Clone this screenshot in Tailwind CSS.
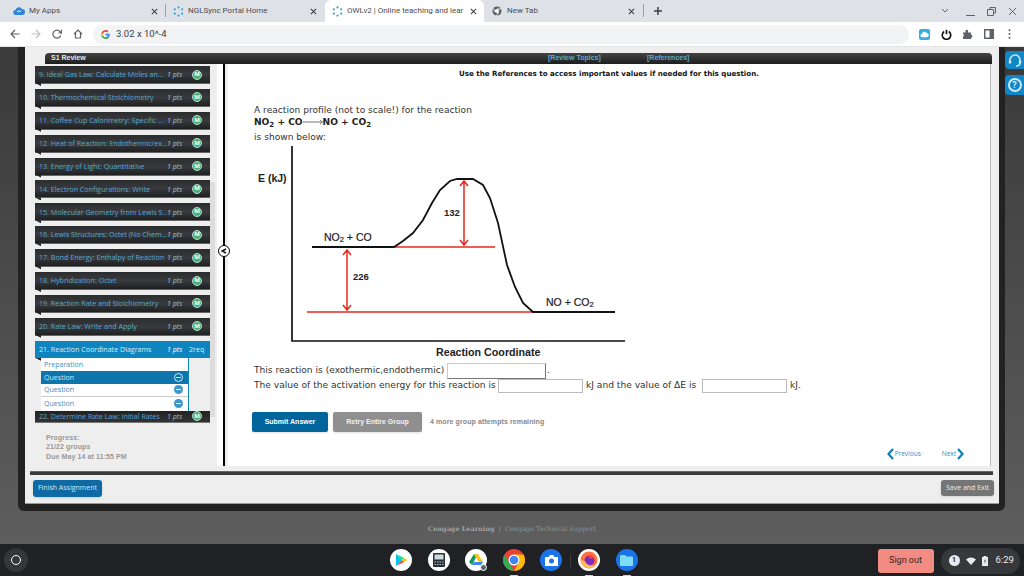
<!DOCTYPE html>
<html lang="en">
  <head>
    <meta charset="UTF-8" />
    <title>OWLv2 | Online teaching and learning</title>
    <script src="https://cdn.jsdelivr.net/npm/@tailwindcss/browser@4"></script>
  </head>
  <body class="w-[1024px] h-[576px] overflow-hidden flex flex-col bg-[#202124] font-['Roboto',sans-serif]">
    <!-- tab strip -->
    <div class="h-[22px] bg-[#dee1e6] flex text-[8px] text-[#4a4d50] shrink-0">
      <div class="w-[165px] flex items-center pl-[13px] pr-[7px] gap-[4px]">
        <svg class="w-[12px] h-[10px]" viewBox="0 0 24 20"><path fill="#2f86d6" d="M6 18a5 5 0 0 1-1-10 7 7 0 0 1 13-2 6 6 0 0 1 0 12z"/><path fill="none" stroke="#fff" stroke-width="2" d="M8 12l3-3 2 3 3-3"/></svg>
        <span class="flex-1">My Apps</span>
        <svg class="w-[7px] h-[7px]" viewBox="0 0 8 8"><path stroke="#3c4043" stroke-width="1.2" d="M1 1l6 6M7 1l-6 6"/></svg>
      </div>
      <div class="w-px h-[13px] mt-[4px] bg-[#9aa0a6]"></div>
      <div class="w-[159px] flex items-center pl-[7px] pr-[8px] gap-[4px]">
        <svg class="w-[11px] h-[11px]" viewBox="0 0 12 12"><g fill="#35a7d9"><circle cx="6" cy="1.6" r="1.2"/><circle cx="10" cy="3.6" r="1.2"/><circle cx="10" cy="8.4" r="1.2"/><circle cx="6" cy="10.4" r="1.2"/><circle cx="2" cy="8.4" r="1.2"/><circle cx="2" cy="3.6" r="1.2"/></g></svg>
        <span class="flex-1">NGLSync Portal Home</span>
        <svg class="w-[7px] h-[7px]" viewBox="0 0 8 8"><path stroke="#3c4043" stroke-width="1.2" d="M1 1l6 6M7 1l-6 6"/></svg>
      </div>
      <div class="w-[159px] bg-white rounded-t-[6px] flex items-center pl-[7px] pr-[7px] gap-[4px]">
        <svg class="w-[11px] h-[11px]" viewBox="0 0 12 12"><g fill="#35a7d9"><circle cx="6" cy="1.6" r="1.2"/><circle cx="10" cy="3.6" r="1.2"/><circle cx="10" cy="8.4" r="1.2"/><circle cx="6" cy="10.4" r="1.2"/><circle cx="2" cy="8.4" r="1.2"/><circle cx="2" cy="3.6" r="1.2"/></g></svg>
        <span class="flex-1 whitespace-nowrap overflow-hidden">OWLv2 | Online teaching and lear</span>
        <svg class="w-[7px] h-[7px]" viewBox="0 0 8 8"><path stroke="#3c4043" stroke-width="1.2" d="M1 1l6 6M7 1l-6 6"/></svg>
      </div>
      <div class="w-[159px] flex items-center pl-[8px] pr-[8px] gap-[4px]">
        <svg class="w-[10px] h-[10px]" viewBox="0 0 12 12"><circle cx="6" cy="6" r="5.5" fill="#5f6368"/><circle cx="6" cy="6" r="2.4" fill="#fff"/><path stroke="#fff" d="M6 3.6h5M3.9 7.2L1.5 3M8 7.2l-2.500 4.400"/></svg>
        <span class="flex-1 ml-[1px]">New Tab</span>
        <svg class="w-[7px] h-[7px]" viewBox="0 0 8 8"><path stroke="#3c4043" stroke-width="1.2" d="M1 1l6 6M7 1l-6 6"/></svg>
      </div>
      <div class="w-px h-[13px] mt-[4px] bg-[#9aa0a6]"></div>
      <svg class="w-[10px] h-[10px] mt-[6px] ml-[9px]" viewBox="0 0 10 10"><path stroke="#3c4043" stroke-width="1.500" d="M5 1v8M1 5h8"/></svg>
      <div class="ml-auto flex items-center gap-[12px] pr-[7px]">
        <svg class="w-[8px] h-[6px] mr-[5px]" viewBox="0 0 8 6"><path fill="none" stroke="#5f6368" d="M1 1l3 3 3-3"/></svg>
        <svg class="w-[9px] h-[9px]" viewBox="0 0 9 9"><path stroke="#5f6368" d="M0 8.500h9"/></svg>
        <svg class="w-[9px] h-[9px]" viewBox="0 0 9 9"><path fill="none" stroke="#5f6368" d="M3 2.500V.5h5.500V6H6.500M.5 2.500H6.500V8.500H.5z"/></svg>
        <svg class="w-[9px] h-[9px]" viewBox="0 0 9 9"><path stroke="#5f6368" d="M1 1l7 7M8 1L1 8"/></svg>
      </div>
    </div>

    <!-- toolbar -->
    <div class="h-[25px] bg-white border-b border-[#e4e5e7] flex items-center shrink-0">
      <div class="flex items-center w-[93px] pl-[10px] gap-[11px]">
        <svg class="w-[10px] h-[10px]" viewBox="0 0 10 10"><path fill="none" stroke="#5f6368" stroke-width="1.200" d="M9.500 5H1M5 1L1 5l4 4"/></svg>
        <svg class="w-[10px] h-[10px]" viewBox="0 0 10 10"><path fill="none" stroke="#bdc1c6" stroke-width="1.200" d="M.5 5H9M5 1l4 4-4 4"/></svg>
        <svg class="w-[10px] h-[10px]" viewBox="0 0 10 10"><path fill="none" stroke="#5f6368" stroke-width="1.200" d="M8.700 6.500A4 4 0 1 1 8 2.500L9.500 4V.8M9.500 4H6.500"/></svg>
        <svg class="w-[10px] h-[10px]" viewBox="0 0 10 10"><path fill="none" stroke="#5f6368" stroke-width="1.200" d="M1 5l4-4 4 4M2.500 4v5h5V4"/></svg>
      </div>
      <div class="w-[816px] h-[19px] rounded-full bg-[#f1f3f4] flex items-center pl-[8px] text-[9.500px] text-[#3c4043] gap-[5px]">
        <svg class="w-[9px] h-[9px]" viewBox="0 0 18 18"><path fill="#4285f4" d="M17.600 9.200c0-.6-.1-1.200-.2-1.800H9v3.500h4.800a4.100 4.100 0 0 1-1.800 2.700v2.200h2.900c1.700-1.600 2.700-3.900 2.700-6.600z"/><path fill="#34a853" d="M9 18c2.400 0 4.500-.8 5.900-2.200L12 13.600c-.8.500-1.800.9-3 .9-2.300 0-4.300-1.600-5-3.700H1v2.300A9 9 0 0 0 9 18z"/><path fill="#fbbc05" d="M4 10.700a5.400 5.400 0 0 1 0-3.400V5H1a9 9 0 0 0 0 8z"/><path fill="#ea4335" d="M9 3.600c1.300 0 2.500.5 3.400 1.300L15 2.400A9 9 0 0 0 1 5l3 2.300c.7-2.100 2.700-3.700 5-3.700z"/></svg>
        <span class="ml-[1px]">3.02 x 10^-4</span>
      </div>
      <div class="flex-1 flex items-center pl-[10px] gap-[11px]">
        <div class="w-[11px] h-[11px] rounded-[2px] bg-[#35aee2] flex items-center justify-center">
          <svg class="w-[9px] h-[7px]" viewBox="0 0 24 20"><path fill="#fff" d="M6 18a5 5 0 0 1-1-10 7 7 0 0 1 13-2 6 6 0 0 1 0 12z"/></svg>
        </div>
        <svg class="w-[11px] h-[11px]" viewBox="0 0 12 12"><path fill="none" stroke="#111" stroke-width="1.800" d="M3.500 2.800a4.600 4.600 0 1 0 5 0M6 .8v5"/></svg>
        <svg class="w-[10px] h-[10px]" viewBox="0 0 10 10"><path fill="#5f6368" d="M0 3.500h2.500V2a1.300 1.300 0 0 1 2.600 0v1.500h3v2.600a1.300 1.300 0 0 1 0 2.600V10H0V7.500a1.300 1.300 0 0 0 0-2.500z"/></svg>
        <svg class="w-[10px] h-[10px]" viewBox="0 0 10 10"><path fill="#5f6368" d="M0 0h10v10H0z"/><path fill="#fff" d="M1.500 1.500h4v7h-4z"/></svg>
        <svg class="w-[3px] h-[10px] ml-[3px]" viewBox="0 0 3 10"><g fill="#5f6368"><circle cx="1.500" cy="1.300" r="1"/><circle cx="1.500" cy="5" r="1"/><circle cx="1.500" cy="8.700" r="1"/></g></svg>
      </div>
    </div>

    <!-- page -->
    <div class="h-[497px] relative bg-linear-to-b from-[#3a3a3a] to-[#5e5e5e] flex flex-col shrink-0">
      <div class="ml-[18px] w-[987px] h-[464px] bg-[#222222] rounded-b-[6px] pl-[7px] pr-[6px] pb-[7px] shrink-0">
        <div class="h-full bg-[#eeeeee] border-b border-[#999] flex flex-col">
          <div class="ml-[20px] mt-[6px] w-[947px] h-[11px] rounded-t-[4px] bg-linear-to-b from-[#444] to-[#1e1e1e] flex items-center text-[7px] font-bold font-['Liberation_Sans',sans-serif] shrink-0">
            <span class="ml-[6px] text-[#e8e8e8] w-[497px]">S1 Review</span>
            <span class="text-[#55a9d8] w-[99px]">[Review Topics]</span>
            <span class="text-[#55a9d8]">[References]</span>
          </div>

          <div class="flex h-[402px] shrink-0">
            <!-- left column -->
            <div class="ml-[10px] w-[175px] flex flex-col pt-[2px] font-['Open_Sans',sans-serif] text-[7.100px] text-[#55a8d4] shrink-0">
              <div class="h-[357px] overflow-hidden flex flex-col gap-[4.900px]">
                <div class="h-[18px] shrink-0 relative border-b border-[#666] bg-linear-to-b from-[#2b2c2e] via-[#393a3d] to-[#1f2022] flex items-center pl-[4px]"><span class="w-[128px] whitespace-nowrap overflow-hidden">9. Ideal Gas Law: Calculate Moles an...</span><span class="w-[25px] italic text-[#8fc3dd]">1 pts</span><span class="w-[10px] h-[10px] rounded-full bg-[#4caf78] border border-[#b5dcc5] text-white text-[6px] font-bold flex items-center justify-center">M</span><i class="absolute left-0 bottom-[-3px] w-[6px] h-[3px] bg-[#222] [clip-path:polygon(0_0,100%_0,100%_100%)]"></i></div>
                <div class="h-[18px] shrink-0 relative border-b border-[#666] bg-linear-to-b from-[#2b2c2e] via-[#393a3d] to-[#1f2022] flex items-center pl-[4px]"><span class="w-[128px] whitespace-nowrap overflow-hidden">10. Thermochemical Stoichiometry</span><span class="w-[25px] italic text-[#8fc3dd]">1 pts</span><span class="w-[10px] h-[10px] rounded-full bg-[#4caf78] border border-[#b5dcc5] text-white text-[6px] font-bold flex items-center justify-center">M</span><i class="absolute left-0 bottom-[-3px] w-[6px] h-[3px] bg-[#222] [clip-path:polygon(0_0,100%_0,100%_100%)]"></i></div>
                <div class="h-[18px] shrink-0 relative border-b border-[#666] bg-linear-to-b from-[#2b2c2e] via-[#393a3d] to-[#1f2022] flex items-center pl-[4px]"><span class="w-[128px] whitespace-nowrap overflow-hidden">11. Coffee Cup Calorimetry: Specific ...</span><span class="w-[25px] italic text-[#8fc3dd]">1 pts</span><span class="w-[10px] h-[10px] rounded-full bg-[#4caf78] border border-[#b5dcc5] text-white text-[6px] font-bold flex items-center justify-center">M</span><i class="absolute left-0 bottom-[-3px] w-[6px] h-[3px] bg-[#222] [clip-path:polygon(0_0,100%_0,100%_100%)]"></i></div>
                <div class="h-[18px] shrink-0 relative border-b border-[#666] bg-linear-to-b from-[#2b2c2e] via-[#393a3d] to-[#1f2022] flex items-center pl-[4px]"><span class="w-[128px] whitespace-nowrap overflow-hidden">12. Heat of Reaction: Endothermic/ex...</span><span class="w-[25px] italic text-[#8fc3dd]">1 pts</span><span class="w-[10px] h-[10px] rounded-full bg-[#4caf78] border border-[#b5dcc5] text-white text-[6px] font-bold flex items-center justify-center">M</span><i class="absolute left-0 bottom-[-3px] w-[6px] h-[3px] bg-[#222] [clip-path:polygon(0_0,100%_0,100%_100%)]"></i></div>
                <div class="h-[18px] shrink-0 relative border-b border-[#666] bg-linear-to-b from-[#2b2c2e] via-[#393a3d] to-[#1f2022] flex items-center pl-[4px]"><span class="w-[128px] whitespace-nowrap overflow-hidden">13. Energy of Light: Quantitative</span><span class="w-[25px] italic text-[#8fc3dd]">1 pts</span><span class="w-[10px] h-[10px] rounded-full bg-[#4caf78] border border-[#b5dcc5] text-white text-[6px] font-bold flex items-center justify-center">M</span><i class="absolute left-0 bottom-[-3px] w-[6px] h-[3px] bg-[#222] [clip-path:polygon(0_0,100%_0,100%_100%)]"></i></div>
                <div class="h-[18px] shrink-0 relative border-b border-[#666] bg-linear-to-b from-[#2b2c2e] via-[#393a3d] to-[#1f2022] flex items-center pl-[4px]"><span class="w-[128px] whitespace-nowrap overflow-hidden">14. Electron Configurations: Write</span><span class="w-[25px] italic text-[#8fc3dd]">1 pts</span><span class="w-[10px] h-[10px] rounded-full bg-[#4caf78] border border-[#b5dcc5] text-white text-[6px] font-bold flex items-center justify-center">M</span><i class="absolute left-0 bottom-[-3px] w-[6px] h-[3px] bg-[#222] [clip-path:polygon(0_0,100%_0,100%_100%)]"></i></div>
                <div class="h-[18px] shrink-0 relative border-b border-[#666] bg-linear-to-b from-[#2b2c2e] via-[#393a3d] to-[#1f2022] flex items-center pl-[4px]"><span class="w-[128px] whitespace-nowrap overflow-hidden">15. Molecular Geometry from Lewis S...</span><span class="w-[25px] italic text-[#8fc3dd]">1 pts</span><span class="w-[10px] h-[10px] rounded-full bg-[#4caf78] border border-[#b5dcc5] text-white text-[6px] font-bold flex items-center justify-center">M</span><i class="absolute left-0 bottom-[-3px] w-[6px] h-[3px] bg-[#222] [clip-path:polygon(0_0,100%_0,100%_100%)]"></i></div>
                <div class="h-[18px] shrink-0 relative border-b border-[#666] bg-linear-to-b from-[#2b2c2e] via-[#393a3d] to-[#1f2022] flex items-center pl-[4px]"><span class="w-[128px] whitespace-nowrap overflow-hidden">16. Lewis Structures: Octet (No Chem...</span><span class="w-[25px] italic text-[#8fc3dd]">1 pts</span><span class="w-[10px] h-[10px] rounded-full bg-[#4caf78] border border-[#b5dcc5] text-white text-[6px] font-bold flex items-center justify-center">M</span><i class="absolute left-0 bottom-[-3px] w-[6px] h-[3px] bg-[#222] [clip-path:polygon(0_0,100%_0,100%_100%)]"></i></div>
                <div class="h-[18px] shrink-0 relative border-b border-[#666] bg-linear-to-b from-[#2b2c2e] via-[#393a3d] to-[#1f2022] flex items-center pl-[4px]"><span class="w-[128px] whitespace-nowrap overflow-hidden">17. Bond Energy: Enthalpy of Reaction</span><span class="w-[25px] italic text-[#8fc3dd]">1 pts</span><span class="w-[10px] h-[10px] rounded-full bg-[#4caf78] border border-[#b5dcc5] text-white text-[6px] font-bold flex items-center justify-center">M</span><i class="absolute left-0 bottom-[-3px] w-[6px] h-[3px] bg-[#222] [clip-path:polygon(0_0,100%_0,100%_100%)]"></i></div>
                <div class="h-[18px] shrink-0 relative border-b border-[#666] bg-linear-to-b from-[#2b2c2e] via-[#393a3d] to-[#1f2022] flex items-center pl-[4px]"><span class="w-[128px] whitespace-nowrap overflow-hidden">18. Hybridization: Octet</span><span class="w-[25px] italic text-[#8fc3dd]">1 pts</span><span class="w-[10px] h-[10px] rounded-full bg-[#4caf78] border border-[#b5dcc5] text-white text-[6px] font-bold flex items-center justify-center">M</span><i class="absolute left-0 bottom-[-3px] w-[6px] h-[3px] bg-[#222] [clip-path:polygon(0_0,100%_0,100%_100%)]"></i></div>
                <div class="h-[18px] shrink-0 relative border-b border-[#666] bg-linear-to-b from-[#2b2c2e] via-[#393a3d] to-[#1f2022] flex items-center pl-[4px]"><span class="w-[128px] whitespace-nowrap overflow-hidden">19. Reaction Rate and Stoichiometry</span><span class="w-[25px] italic text-[#8fc3dd]">1 pts</span><span class="w-[10px] h-[10px] rounded-full bg-[#4caf78] border border-[#b5dcc5] text-white text-[6px] font-bold flex items-center justify-center">M</span><i class="absolute left-0 bottom-[-3px] w-[6px] h-[3px] bg-[#222] [clip-path:polygon(0_0,100%_0,100%_100%)]"></i></div>
                <div class="h-[18px] shrink-0 relative border-b border-[#666] bg-linear-to-b from-[#2b2c2e] via-[#393a3d] to-[#1f2022] flex items-center pl-[4px]"><span class="w-[128px] whitespace-nowrap overflow-hidden">20. Rate Law: Write and Apply</span><span class="w-[25px] italic text-[#8fc3dd]">1 pts</span><span class="w-[10px] h-[10px] rounded-full bg-[#4caf78] border border-[#b5dcc5] text-white text-[6px] font-bold flex items-center justify-center">M</span><i class="absolute left-0 bottom-[-3px] w-[6px] h-[3px] bg-[#222] [clip-path:polygon(0_0,100%_0,100%_100%)]"></i></div>
                <div class="shrink-0 flex flex-col">
                  <div class="h-[17px] bg-[#0f85c0] text-[#d6edf8] flex items-center pl-[4px]"><span class="w-[128px] whitespace-nowrap overflow-hidden">21. Reaction Coordinate Diagrams</span><span class="w-[22px] italic text-white">1 pts</span><span>2req</span></div>
                  <div class="ml-[6px] w-[148px] border-r border-[#0f85c0] text-[#3a8fbf] relative">
                    <i class="absolute left-[-6px] top-0 w-[6px] h-[3px] bg-[#222] [clip-path:polygon(0_0,100%_0,100%_100%)]"></i>
                    <div class="h-[13px] bg-white flex items-center pl-[3px]">Preparation</div>
                    <div class="h-[13px] bg-[#0f75ad] text-[#cfe8f5] flex items-center justify-between pl-[3px] pr-[5px]">Question<span class="w-[9px] h-[9px] rounded-full border border-[#cfe8f5] flex items-center justify-center"><span class="w-[5px] h-px bg-[#cfe8f5]"></span></span></div>
                    <div class="h-[13px] bg-white border-b border-[#ccc] flex items-center justify-between pl-[3px] pr-[5px]">Question<span class="w-[9px] h-[9px] rounded-full bg-[#3d98cf] flex items-center justify-center"><span class="w-[5px] h-px bg-white"></span></span></div>
                    <div class="h-[14px] bg-white flex items-center justify-between pl-[3px] pr-[5px]">Question<span class="w-[9px] h-[9px] rounded-full bg-[#3d98cf] flex items-center justify-center"><span class="w-[5px] h-px bg-white"></span></span></div>
                  </div>
                  <div class="h-[12px] border-b border-[#777] bg-linear-to-b from-[#222] to-[#333] flex items-center pl-[4px] overflow-hidden"><span class="w-[128px] whitespace-nowrap overflow-hidden">22. Determine Rate Law: Initial Rates</span><span class="w-[25px] italic text-[#8fc3dd]">1 pts</span><span class="w-[10px] h-[10px] rounded-full bg-[#4caf78] border border-[#b5dcc5] text-white text-[6px] font-bold flex items-center justify-center">M</span></div>
                </div>
              </div>
              <div class="ml-[11px] mt-[11px] font-['Liberation_Sans',sans-serif] font-bold text-[7px] leading-[8.500px] tracking-[0.1px] text-[#999]">
                <div>Progress:</div>
                <div>21/22 groups</div>
                <div class="mt-[1.500px]">Due May 14 at 11:55 PM</div>
              </div>
            </div>
            <!-- scrollbar -->
            <div class="w-[5px] h-[235px] mt-[118px] bg-[#dddddd] shrink-0"></div>
            <!-- divider -->
            <div class="ml-[2px] w-[6px] bg-white shrink-0"></div>
            <div class="w-[2px] bg-black shrink-0"></div>
            <div class="w-[3px] shrink-0"></div>

            <!-- question -->
            <div class="w-[763px] bg-white border-r border-[#bbb] font-['DejaVu_Sans',sans-serif] text-[#333] text-[9.100px] shrink-0 relative">
              <p class="text-center text-[7.100px] font-bold text-[#111] mt-[5px] leading-[9px]">Use the References to access important values if needed for this question.</p>
              <div class="pl-[26px]">
                <p class="mt-[26px] leading-[12px]">A reaction profile (not to scale!) for the reaction</p>
                <p class="font-bold text-[#222] leading-[12px] flex items-center h-[12px]">
                  <span>NO<sub class="text-[7px]">2</sub> + CO</span>
                  <svg class="w-[20px] h-[6px]" viewBox="0 0 20 6"><path fill="none" stroke="#555" stroke-width=".8" d="M0 3h19.500M17 1l2.500 2L17 5"/></svg>
                  <span>NO + CO<sub class="text-[7px]">2</sub></span>
                </p>
                <p class="mt-[3px] leading-[12px]">is shown below:</p>
                <svg class="block ml-[-2px]" width="400" height="215" viewBox="252 143 400 215" font-family="Liberation Sans, sans-serif">
                  <path fill="none" stroke="#111" stroke-width="1.700" d="M292 146V341H625"/>
                  <path fill="none" stroke="#e8281e" stroke-width="1.500" d="M395 247H495M307 312H533M464 181V245M460 186l4-5 4 5M460 240l4 5 4-5M347 250V310M343 255l4-5 4 5M343 305l4 5 4-5"/>
                  <path fill="none" stroke="#111" stroke-width="1.800" d="M312 247H394L403 241 413 233 423 220 432 203 440 190 450 181 457 179H473L483 185 490 198 498 223 507 265 515 287 523 303 533 312H615"/>
                  <g font-weight="bold" font-size="10.500px" fill="#222">
                    <text x="258" y="182">E (kJ)</text>
                    <text x="324" y="241" font-weight="normal" stroke="#222" stroke-width=".2">NO<tspan font-size="7.500px" dy="1">2</tspan><tspan dy="-1"> + CO</tspan></text>
                    <text x="444" y="216" font-size="9.500px">132</text>
                    <text x="353" y="280" font-size="9.500px">226</text>
                    <text x="546" y="306" font-weight="normal" stroke="#222" stroke-width=".2">NO + CO<tspan font-size="7.500px" dy="1">2</tspan></text>
                    <text x="436" y="356" font-size="10.700px">Reaction Coordinate</text>
                  </g>
                </svg>
                <div class="flex items-center h-[16px] mt-[5px] whitespace-nowrap">
                  <span class="w-[193px]">This reaction is (exothermic,endothermic)</span>
                  <input class="w-[99px] h-[16px] border border-[#ccc] border-b-[#777] border-r-[#777] bg-white" type="text" />
                  <span class="ml-[1px]">.</span>
                </div>
                <div class="flex items-center h-[14px] whitespace-nowrap">
                  <span class="w-[244px]">The value of the activation energy for this reaction is</span>
                  <input class="w-[85px] h-[14px] border border-[#bbb] bg-white" type="text" />
                  <span class="w-[119px] pl-[3px]">kJ and the value of ΔE is</span>
                  <input class="w-[85px] h-[14px] border border-[#bbb] bg-white" type="text" />
                  <span class="ml-[3px]">kJ.</span>
                </div>
                <div class="flex items-center mt-[19px] ml-[-2px] font-['Liberation_Sans',sans-serif] text-[7px] font-bold">
                  <button class="w-[76px] h-[20px] rounded-[2px] bg-[#00659c] text-white shadow-sm">Submit Answer</button>
                  <button class="ml-[5px] w-[89px] h-[20px] rounded-[2px] bg-[#8f8f8f] text-[#f2f2f2] shadow-sm">Retry Entire Group</button>
                  <span class="ml-[8px] text-[#888] tracking-[0.1px]">4 more group attempts remaining</span>
                </div>
              </div>
              <!-- prev / next -->
              <div class="absolute right-[26px] bottom-[6px] flex items-center font-['Open_Sans',sans-serif] text-[6.500px] text-[#2f8fc4]">
                <svg class="w-[7px] h-[12px] mr-[1px]" viewBox="0 0 7 12"><path fill="none" stroke="#0b7fb8" stroke-width="2.200" d="M6 1L1.500 6 6 11"/></svg>
                <span>Previous</span>
                <span class="ml-[21px]">Next</span>
                <svg class="w-[7px] h-[12px] ml-[1px]" viewBox="0 0 7 12"><path fill="none" stroke="#0b7fb8" stroke-width="2.200" d="M1 1l4.500 5L1 11"/></svg>
              </div>
              <!-- collapse toggle -->
              <div class="absolute left-[-10px] top-[181px] w-[12px] h-[12px] rounded-full bg-white border border-black flex items-center justify-center">
                <svg class="w-[6px] h-[6px]" viewBox="0 0 6 6"><path fill="none" stroke="#111" stroke-width="1.500" d="M5 1L1 3l4 2"/></svg>
              </div>
            </div>
          </div>

          <!-- bottom bar -->
          <div class="ml-[5px] mt-[5px] w-[963px] h-[4px] bg-[#3a3a3a] border-t border-[#1b7fb5] shrink-0"></div>
          <div class="flex justify-between items-start ml-[8px] w-[961px] mt-[5px] font-['Open_Sans',sans-serif] text-[7px]">
            <button class="w-[69px] h-[17px] rounded-[3px] bg-[#0e6aa5] text-[#d5e8f3] shadow-sm">Finish Assignment</button>
            <button class="w-[53px] h-[16px] rounded-[3px] bg-[#757575] text-[#eee] shadow-sm">Save and Exit</button>
          </div>
        </div>
      </div>
      <div class="flex-1 flex items-center justify-center pt-[4px] font-['DejaVu_Serif',serif] text-[6.500px] text-[#a0a0a0] font-bold">
        <span>Cengage Learning</span><span class="mx-[4px] font-normal">|</span><span class="font-normal text-[#929292]">Cengage Technical Support</span>
      </div>
      <!-- help tabs stuck on the window edge -->
      <div class="absolute right-0 top-[4px] w-[19px] h-[18px] rounded-l-[4px] bg-[#1287c8] flex items-center justify-center">
        <svg class="w-[14px] h-[14px]" viewBox="0 0 14 14"><path fill="none" stroke="#cfe9f6" stroke-width="1.500" d="M2 9V7a5 5 0 0 1 10 0v2M12 10c0 2-2 3-4 3"/><path stroke="#cfe9f6" stroke-width="2.400" d="M2 7.500v3M12 7.500v3"/></svg>
      </div>
      <div class="absolute right-0 top-[28px] w-[19px] h-[20px] rounded-l-[4px] bg-[#1287c8] flex items-center justify-center">
        <span class="w-[14px] h-[14px] rounded-full border-2 border-[#cfe9f6] text-[#cfe9f6] text-[9px] font-bold leading-none flex items-center justify-center">?</span>
      </div>
    </div>

    <!-- shelf -->
    <div class="flex-1 flex items-center bg-[#202124]">
      <div class="ml-[4px] w-[24px] h-[24px] rounded-full bg-[#35363a] flex items-center justify-center">
        <span class="w-[10px] h-[10px] rounded-full border border-white"></span>
      </div>
      <div class="ml-[362px] flex items-center gap-[15.500px]">
        <div class="w-[22px] h-[22px] rounded-full bg-white flex items-center justify-center">
          <svg class="w-[13px] h-[14px]" viewBox="0 0 13 14"><path fill="#00c3f0" d="M1 1l6 6-6 6z"/><path fill="#00e676" d="M1 1l8 4-2 2z"/><path fill="#f44336" d="M1 13l8-4-2-2z"/><path fill="#ffc107" d="M9 5l3.500 2L9 9 7 7z"/></svg>
        </div>
        <div class="w-[22px] h-[22px] rounded-full bg-white flex items-center justify-center">
          <svg class="w-[12px] h-[14px]" viewBox="0 0 12 14"><rect width="12" height="14" rx="1" fill="#263238"/><rect x="1.500" y="1.500" width="9" height="5" fill="#cfd8dc"/><path stroke="#b0bec5" stroke-width="1.200" stroke-dasharray="1.500 1" d="M1.500 9h9M1.500 11.500h9"/></svg>
        </div>
        <div class="w-[22px] h-[22px] rounded-full bg-white flex items-center justify-center relative">
          <svg class="w-[14px] h-[12px]" viewBox="0 0 14 12"><path fill="#ffc107" d="M5 0h4l5 8H10z"/><path fill="#0f9d58" d="M5 0l2 3.500L3 11 0 8z"/><path fill="#4285f4" d="M3 11l2-3h9l-2 3z"/></svg>
          <span class="absolute right-0 bottom-0 w-[7px] h-[7px] rounded-full bg-[#5f6368] border border-white"></span>
        </div>
        <div class="w-[22px] h-[22px] relative">
          <svg class="w-[22px] h-[22px]" viewBox="0 0 22 22"><circle cx="11" cy="11" r="11" fill="#ea4335"/><path fill="#34a853" d="M11 22A11 11 0 0 1 1.500 5.500L7 15z"/><path fill="#fbbc05" d="M11 22A11 11 0 0 0 20.500 5.500H11L15 15z"/><circle cx="11" cy="11" r="5.500" fill="#fff"/><circle cx="11" cy="11" r="4.300" fill="#4285f4"/></svg>
          <span class="absolute bottom-[-5px] left-[7px] w-[8px] h-[1.500px] bg-[#ccc]"></span>
        </div>
        <div class="w-[22px] h-[22px] rounded-full bg-[#1a73e8] flex items-center justify-center">
          <svg class="w-[13px] h-[11px]" viewBox="0 0 13 11"><path fill="#fff" d="M0 2h3.500L5 0h3l1.500 2H13v9H0z"/><circle cx="6.500" cy="6" r="2.500" fill="#1a73e8"/></svg>
        </div>
        <div class="w-px h-[13px] bg-[#3c4043] mx-[-8px]"></div>
        <div class="w-[22px] h-[22px] rounded-full bg-white flex items-center justify-center relative">
          <svg class="w-[18px] h-[18px]" viewBox="0 0 18 18"><circle cx="9" cy="9" r="8.500" fill="#ff7139"/><circle cx="9.500" cy="9.500" r="5" fill="#7b2cbf"/><path fill="#ffbd4f" d="M1 9a8 8 0 0 0 15 4 7 7 0 0 1-11-3z"/><path fill="#ff3750" d="M8 4l4 1 1 3-4-1z"/></svg>
          <span class="absolute bottom-[-5px] left-[7px] w-[8px] h-[1.500px] bg-[#ccc]"></span>
        </div>
        <div class="w-[22px] h-[22px] rounded-full bg-[#1a73e8] flex items-center justify-center relative">
          <svg class="w-[13px] h-[11px]" viewBox="0 0 13 11"><path fill="#7fdcf5" d="M0 1a1 1 0 0 1 1-1h4l1.500 1.500H12a1 1 0 0 1 1 1V10a1 1 0 0 1-1 1H1a1 1 0 0 1-1-1z"/></svg>
          <span class="absolute bottom-[-5px] left-[7px] w-[8px] h-[1.500px] bg-[#ccc]"></span>
        </div>
      </div>
      <button class="ml-[240px] mt-[2px] w-[56px] h-[24px] rounded-[3px] bg-[#f28b82] text-[#3c2422] text-[9px]">Sign out</button>
      <div class="ml-[7px] mt-[1px] w-[79px] h-[26px] rounded-full bg-[#37383c] flex items-center pl-[8px] gap-[6px] text-[#e8eaed] text-[9.500px]">
        <span class="w-[11px] h-[11px] rounded-full bg-[#e8eaed] text-[#202124] text-[7px] font-bold flex items-center justify-center">1</span>
        <svg class="w-[10px] h-[8px]" viewBox="0 0 10 8"><path fill="#e8eaed" d="M0 2.500a7.500 7.500 0 0 1 10 0L5 8z"/></svg>
        <svg class="w-[6px] h-[10px]" viewBox="0 0 6 10"><path fill="#e8eaed" d="M1.500 0h3v1H6v9H0V1h1.500z"/><path fill="#37383c" d="M3.500 2.500L2 5.500h1L2.500 8 4 4.500H3z"/></svg>
        <span class="ml-[2px]">6:29</span>
      </div>
    </div>
  </body>
</html>
